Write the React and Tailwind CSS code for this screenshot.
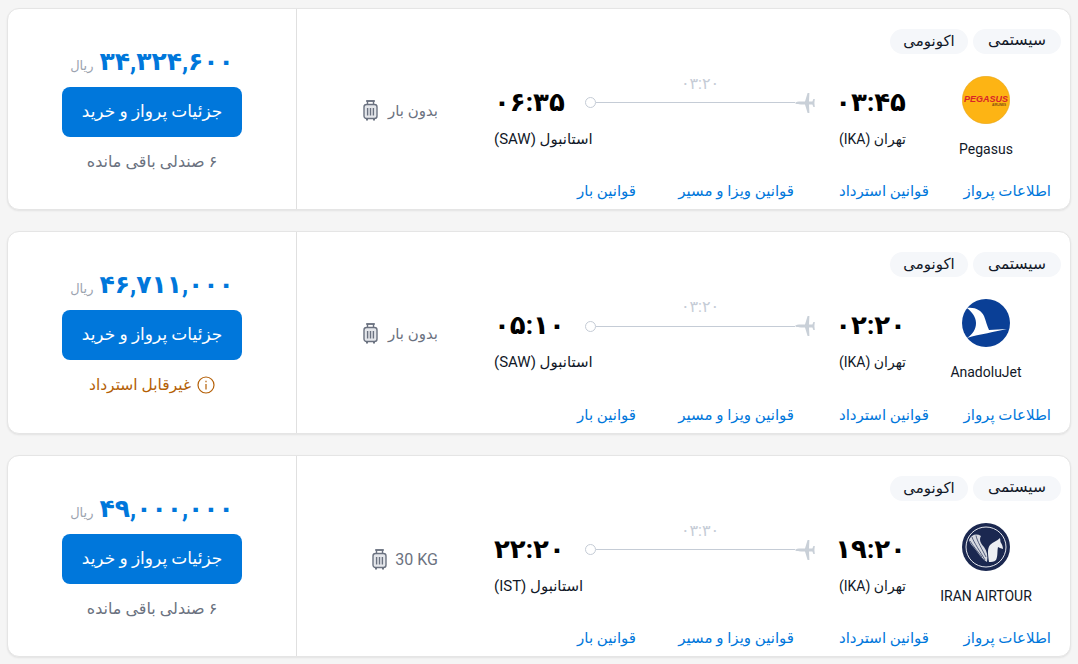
const flights = [
  { logo: 'pegasus', airline: 'Pegasus', dep: '۰۳:۴۵', arr: '۰۶:۳۵', duration: '۰۳:۲۰', to: 'استانبول (SAW)', bag: 'بدون بار', price: '۳۴,۳۲۴,۶۰۰', note: '۶ صندلی باقی مانده' },
  { logo: 'anadolu', airline: 'AnadoluJet', dep: '۰۲:۲۰', arr: '۰۵:۱۰', duration: '۰۳:۲۰', to: 'استانبول (SAW)', bag: 'بدون بار', price: '۴۶,۷۱۱,۰۰۰', warn: 'غیرقابل استرداد' },
  { logo: 'airtour', airline: 'IRAN AIRTOUR', dep: '۱۹:۲۰', arr: '۲۲:۲۰', duration: '۰۳:۳۰', to: 'استانبول (IST)', bag: '30 KG', price: '۴۹,۰۰۰,۰۰۰', note: '۶ صندلی باقی مانده' },
]

const links = [
  { label: 'اطلاعات پرواز', cls: 'w-[122px]' },
  { label: 'قوانین استرداد', cls: 'w-[135px]' },
  { label: 'قوانین ویزا و مسیر', cls: 'w-[158px]' },
  { label: 'قوانین بار', cls: '' },
]

const Logo = ({ type }) => {
  if (type === 'pegasus') {
    return (
      <svg width="48" height="48" viewBox="0 0 48 48">
        <circle cx="24" cy="24" r="23.7" fill="#fdb414" stroke="#e8a512" strokeWidth="0.6" />
        <text x="24" y="26" textAnchor="middle" fontFamily="Liberation Sans" fontSize="9.6" fontWeight="700" fontStyle="italic" fill="#d8232a" textLength="44" lengthAdjust="spacingAndGlyphs" direction="ltr">PEGASUS</text>
        <text x="37" y="30" textAnchor="middle" fontFamily="Liberation Sans" fontSize="3" fontWeight="700" fill="#7a4a10" direction="ltr">AIRLINES</text>
      </svg>
    )
  }
  if (type === 'anadolu') {
    return (
      <svg width="48" height="48" viewBox="0 0 48 48">
        <circle cx="24" cy="24" r="24" fill="#0a3f96" />
        <path d="M5 9 C13 8 19 11 22 17 C24 22 25 27 27 31 L45 30 C33 33 18 35 5 39 C11 35 14 30 14 24 C14 18 10 13 5 9 Z" fill="#fff" />
      </svg>
    )
  }
  return (
    <svg width="48" height="48" viewBox="0 0 48 48">
      <circle cx="24" cy="24" r="24" fill="#1b2850" />
      <circle cx="24" cy="24" r="20" fill="none" stroke="#e6e8ee" strokeWidth="1" />
      <path d="M7 17 C9 12 14 10 19 13 C17 16 18 20 22 24 C25 28 26 33 25 39 C20 36 16 30 13 26 C11 23 8 21 7 17 Z" fill="#d5d8e0" />
      <path d="M10 14 C12 20 18 28 23 37 M14 12.5 C15 18 20 26 24 34 M8 18 C11 23 16 29 20 34" stroke="#1b2850" strokeWidth="0.7" fill="none" />
      <path d="M27 39 C26 31 25 26 28 22 C31 19 35 18 38 15 L38.5 19 C40 21 41 24 41 26 L38 25 L36 24 C35 29 36 33 34 37 C32 39 29 39 27 39 Z" fill="#eceef2" />
    </svg>
  )
}

const BagIcon = () => (
  <svg width="15" height="22" viewBox="0 0 15 22" fill="none" stroke="#6b7280" strokeWidth="1.4" className="shrink-0">
    <path d="M4.5 4.5 V1 H10.5 V4.5" />
    <path d="M3 1 H12" />
    <rect x="1" y="4.5" width="13" height="14" rx="2.5" fill="#e5e7eb" />
    <path d="M4.6 8 V15.5 M7.5 8 V15.5 M10.4 8 V15.5" />
    <path d="M4 18.5 V20.5 M11 18.5 V20.5" strokeWidth="2" />
  </svg>
)

// nose points left, towards the line
const PlaneIcon = () => (
  <svg width="20" height="22" viewBox="0 0 20 22" fill="#c9d0d8" className="shrink-0">
    <path d="M0 11 C1 9.8 3 9.6 6 9.6 L10 9.4 L12.6 1 H14.4 L14 9.4 L17.4 9.6 L18.4 7 H19.8 L19.4 11 L19.8 15 H18.4 L17.4 12.4 L14 12.6 L14.4 21 H12.6 L10 12.6 L6 12.4 C3 12.4 1 12.2 0 11 Z" />
  </svg>
)

const FlightCard = ({ f }) => (
  <div dir="rtl" className="flex h-[202.5px] overflow-hidden rounded-xl border border-[#e5e5e5] bg-white shadow-[0_1px_2px_rgba(0,0,0,0.08)]">
    <div className="flex min-w-0 flex-1 flex-col pr-[9px] pt-[20px]">
      <div className="flex gap-[5px]">
        <span className="flex h-[25px] w-[88px] items-center justify-center rounded-full bg-[#f5f7fa] text-[15.5px] text-[#111827]">سیستمی</span>
        <span className="flex h-[25px] w-[78px] items-center justify-center rounded-full bg-[#f5f7fa] text-[15px] text-[#111827]">اکونومی</span>
      </div>

      <div className="mt-[22px] flex items-start">
        <div className="flex w-[150px] shrink-0 flex-col items-center">
          <Logo type={f.logo} />
          <div dir="ltr" className="mt-[15px] whitespace-nowrap text-[14px] leading-[20px] text-[#111827]">{f.airline}</div>
        </div>
        <div className="mr-[5px] mt-[13px] w-[76px] shrink-0">
          <div className="text-[26px] font-bold leading-[26px] text-black">{f.dep}</div>
          <div className="mt-[14px] whitespace-nowrap text-[14px] leading-[20px] text-[#111827]">تهران (IKA)</div>
        </div>
        <div className="-ml-[11px] mr-[15px] w-[230px] shrink-0">
          <div className="text-center text-[16px] leading-[16px] text-[#c5ccd6]">{f.duration}</div>
          <div className="flex items-center">
            <PlaneIcon />
            <div className="h-px flex-1 bg-[#c5ccd6]" />
            <div className="h-[11px] w-[11px] rounded-full border border-[#c5ccd6] bg-white" />
          </div>
        </div>
        <div className="mt-[13px] w-[102px] shrink-0 text-left">
          <div className="text-[26px] font-bold leading-[26px] text-black">{f.arr}</div>
          <div className="mt-[14px] whitespace-nowrap text-[15px] leading-[20px] text-[#111827]">{f.to}</div>
        </div>
        {f.bag === '30 KG' ? (
          <div className="mr-[56px] mt-[26px] flex items-center gap-[8px] text-[16px] leading-[22px] text-[#6b7280]">
            <span className="whitespace-nowrap" dir="ltr">{f.bag}</span>
            <BagIcon />
          </div>
        ) : (
          <div className="mr-[56px] mt-[24px] flex items-center gap-[10px] text-[15px] leading-[22px] text-[#6b7280]">
            <span className="whitespace-nowrap">{f.bag}</span>
            <BagIcon />
          </div>
        )}
      </div>

      <div className="mt-auto flex pb-[8px] pr-[10px] text-[15px] leading-[20px] text-[#0077db]">
        {links.map((l) => <a key={l.label} className={`whitespace-nowrap ${l.cls}`}>{l.label}</a>)}
      </div>
    </div>

    <div className="flex w-[289px] shrink-0 flex-col items-center border-r border-[#e0e0e0] pt-[37px]">
      <div className="flex items-end gap-[6px]">
        <span className="text-[25px] font-bold leading-[32px] text-[#0077db]">{f.price}</span>
        <span className="text-[13px] leading-[24px] text-[#9ca3af]">ریال</span>
      </div>
      <button className="mt-[9px] h-[50px] w-[180px] rounded-lg bg-[#0077db] text-[17px] text-white">جزئیات پرواز و خرید</button>
      {f.warn ? (
        <div className="mt-[14px] flex items-center gap-[6px] text-[15.5px] leading-[22px] text-[#b45f06]">
          <svg width="18" height="18" viewBox="0 0 18 18" fill="none" stroke="#b45f06" strokeWidth="1.2">
            <circle cx="9" cy="9" r="8" />
            <path d="M9 8 V13.5 M9 4.8 V6.2" />
          </svg>
          <span>{f.warn}</span>
        </div>
      ) : (
        <div className="mt-[14px] text-[16px] leading-[22px] text-[#6b7280]">{f.note}</div>
      )}
    </div>
  </div>
)

export default function App() {
  return (
    <div className="flex min-h-[664px] flex-col gap-[21px] bg-[#f5f5f5] px-[7px] py-[7.5px] font-['Roboto','DejaVu_Sans',sans-serif]">
      {flights.map((f) => <FlightCard key={f.airline} f={f} />)}
    </div>
  )
}
